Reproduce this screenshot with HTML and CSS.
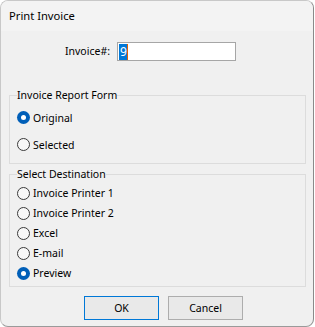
FILE: index.html
```html
<!DOCTYPE html>
<html>
<head>
<meta charset="utf-8">
<link rel="stylesheet" href="styles.css">
</head>
<body>
<div class="dialog">
  <div class="titlebar">Print Invoice</div>
  <div class="content">
    <div class="invoice-row">
      <span class="label">Invoice#:</span>
      <div class="textbox"><span class="sel">9</span></div>
    </div>
    <fieldset class="group group-form">
      <legend>Invoice Report Form</legend>
      <div class="opt opt-tall"><span class="radio checked"></span><span>Original</span></div>
      <div class="opt opt-tall"><span class="radio"></span><span>Selected</span></div>
    </fieldset>
    <fieldset class="group group-dest">
      <legend>Select Destination</legend>
      <div class="opt"><span class="radio"></span><span>Invoice Printer 1</span></div>
      <div class="opt"><span class="radio"></span><span>Invoice Printer 2</span></div>
      <div class="opt"><span class="radio"></span><span>Excel</span></div>
      <div class="opt"><span class="radio"></span><span>E-mail</span></div>
      <div class="opt"><span class="radio checked"></span><span>Preview</span></div>
    </fieldset>
    <div class="buttons">
      <div class="btn btn-default">OK</div>
      <div class="btn">Cancel</div>
    </div>
  </div>
</div>
</body>
</html>
```
FILE: styles.css
```css
html, body {
  margin: 0;
  padding: 0;
  background: #ffffff;
}
body {
  font-family: "Noto Sans", "Open Sans", sans-serif;
  font-size: 10.5px;
  color: #000;
}
.dialog {
  box-sizing: border-box;
  width: 314px;
  height: 327px;
  border: 1px solid #c8c8c8;
  border-right-color: #8a8a8a;
  border-bottom-color: #9a9a9a;
  border-radius: 8px;
  overflow: hidden;
  background: #f0f0f0;
  display: flex;
  flex-direction: column;
}
.titlebar {
  height: 30px;
  line-height: 30px;
  padding-left: 8px;
  background: #f3f3f3;
  font-size: 11.2px;
}
.content {
  display: flex;
  flex-direction: column;
  padding-left: 8px;
}
.invoice-row {
  display: flex;
  align-items: center;
  margin-top: 11px;
}
.label {
  width: 101px;
  margin-right: 7px;
  text-align: right;
  line-height: 19px;
}
.textbox {
  box-sizing: border-box;
  width: 119px;
  height: 19px;
  border: 1px solid #a6a6a6;
  background: #fff;
  padding: 1px 0 0 1px;
  display: flex;
}
.sel {
  background: #0078d7;
  color: #fff;
  font-size: 12px;
  line-height: 15px;
  padding: 0 0 0 1px;
  border-right: 1px solid #e06000;
}
.group {
  box-sizing: border-box;
  width: 297px;
  margin: 0;
  padding: 0 0 0 7px;
  border: 1px solid #dcdcdc;
  min-width: 0;
}
.group legend {
  padding: 0;
  margin-left: 0;
  line-height: 14px;
}
.group-form {
  margin-top: 27px;
  padding-bottom: 5px;
}
.group-form .opt:first-of-type {
  margin-top: 2px;
}
.group-dest {
  margin-top: 3px;
  padding-bottom: 3px;
}
.group-dest .opt:first-of-type {
  margin-top: 2px;
}
.opt {
  display: flex;
  align-items: center;
  height: 20px;
  gap: 3px;
}
.opt-tall {
  height: 27px;
}
.radio {
  box-sizing: border-box;
  width: 13px;
  height: 13px;
  border-radius: 50%;
  border: 1px solid #3a3a3a;
  background: #f7f7f7;
  display: flex;
  align-items: center;
  justify-content: center;
}
.radio.checked {
  border: none;
  background: #005fb8;
}
.radio.checked::after {
  content: "";
  width: 5px;
  height: 5px;
  border-radius: 50%;
  background: #fff;
}
.buttons {
  display: flex;
  gap: 9px;
  margin-top: 9px;
  padding-left: 75px;
}
.btn {
  box-sizing: border-box;
  width: 75px;
  height: 24px;
  border: 1px solid #adadad;
  background: #e9e9e9;
  display: flex;
  align-items: center;
  justify-content: center;
}
.btn-default {
  border-color: #0078d7;
}
```
